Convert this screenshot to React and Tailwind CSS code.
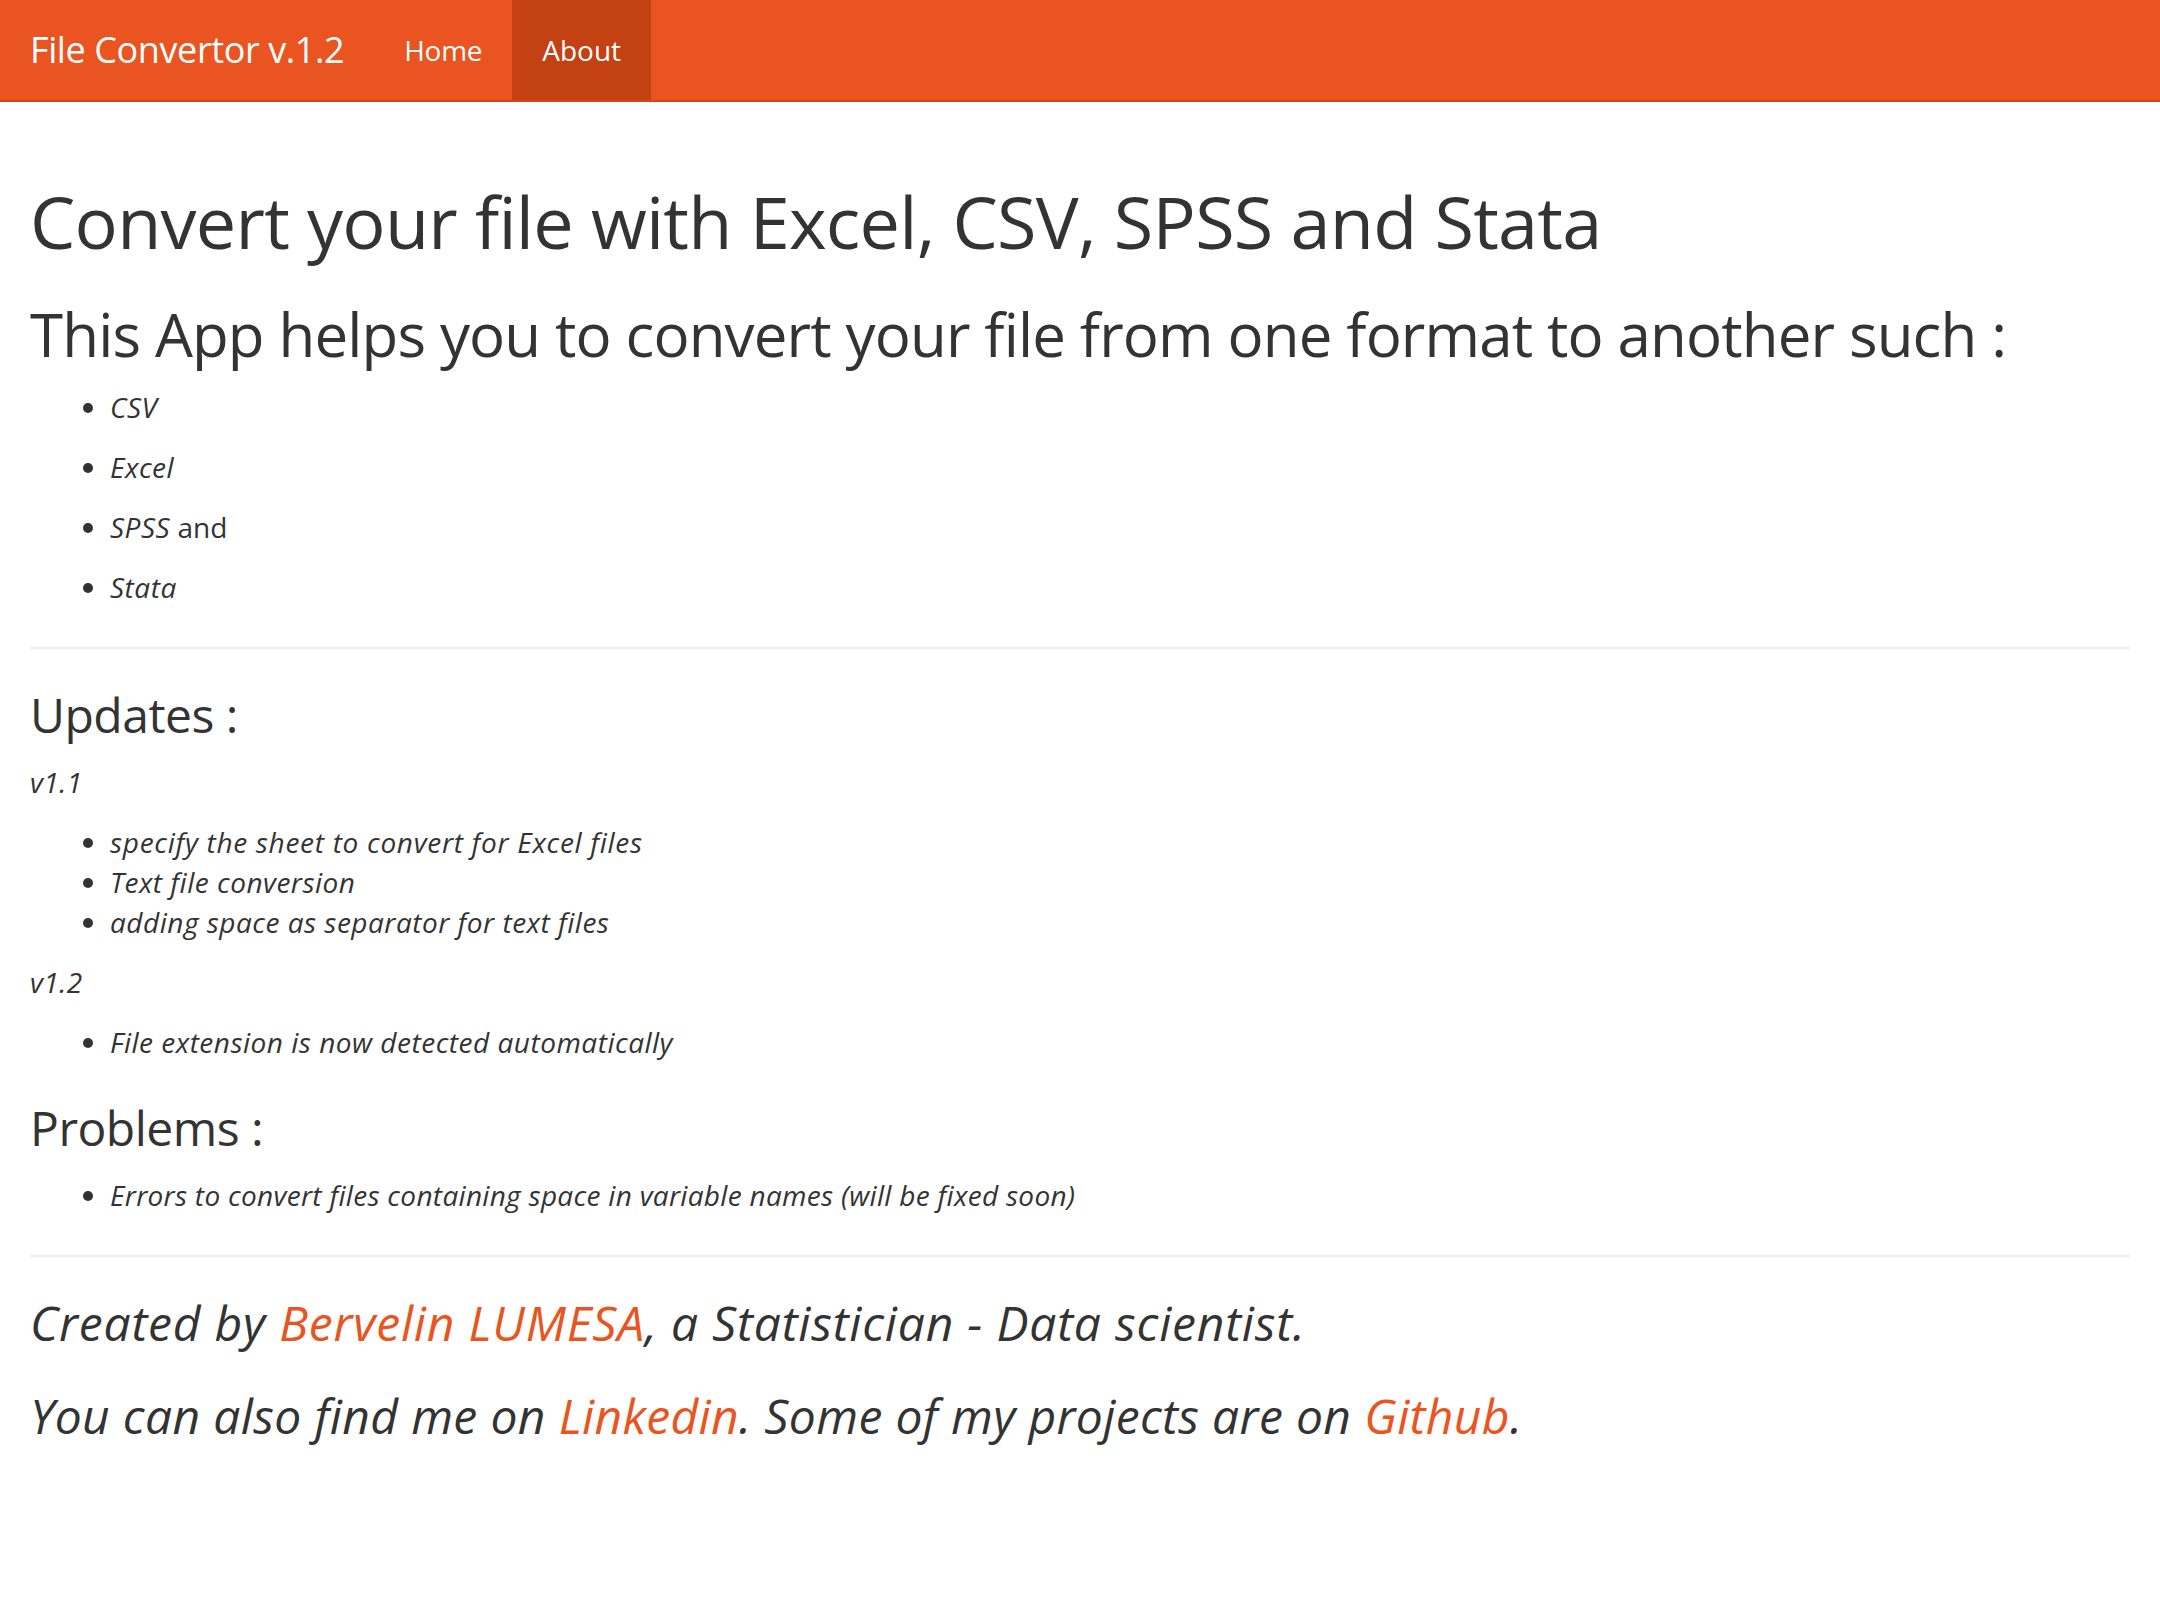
const LINK = 'text-[#e95420] hover:underline';
const EM = 'tracking-[0.5px]';

export default function App() {
  return (
    <div className="min-h-screen bg-white font-['Open_Sans',sans-serif] text-[28px] leading-[40px] text-[#333]">
      {/* Navbar */}
      <nav className="flex h-[102px] border-b-2 border-[#d34615] bg-[#e95420]">
        <a href="#" className="flex h-[100px] items-center px-[30px] text-[36px] tracking-[-0.4px] text-white">
          File Convertor v.1.2
        </a>
        <a href="#" className="flex h-[100px] items-center px-[30px] tracking-[-0.3px] text-white">
          Home
        </a>
        <a href="#" className="flex h-[100px] items-center bg-[#c34113] px-[30px] text-white">
          About
        </a>
      </nav>

      <div className="flow-root px-[30px] pt-[40px]">
        <h1 className="mt-[40px] mb-[20px] text-[72px] leading-[1.1] tracking-[-0.75px]">
          Convert your file with Excel, CSV, SPSS and Stata
        </h1>
        <h2 className="mt-[40px] mb-[20px] text-[60px] leading-[1.1] tracking-[-0.85px]">
          This App helps you to convert your file from one format to another such :
        </h2>
        <ul className="mb-[20px] list-disc pl-[80px]">
          <li><p className="mb-[20px]"><em className={EM}>CSV</em></p></li>
          <li><p className="mb-[20px]"><em className={EM}>Excel</em></p></li>
          <li><p className="mb-[20px]"><em className={EM}>SPSS</em> and</p></li>
          <li><p className="mb-[20px]"><em className={EM}>Stata</em></p></li>
        </ul>

        <hr className="my-[40px] border-t-2 border-[#eeeeee]" />

        <h3 className="mt-[40px] mb-[20px] text-[48px] leading-[1.1] tracking-[-0.5px]">Updates :</h3>
        <p className="mb-[20px]"><em className={EM}>v1.1</em></p>
        <ul className="mb-[20px] list-disc pl-[80px]">
          <li><em className="tracking-[0.7px]">specify the sheet to convert for Excel files</em></li>
          <li><em className={EM}>Text file conversion</em></li>
          <li><em className={EM}>adding space as separator for text files</em></li>
        </ul>
        <p className="mb-[20px]"><em className={EM}>v1.2</em></p>
        <ul className="mb-[20px] list-disc pl-[80px]">
          <li><em className={EM}>File extension is now detected automatically</em></li>
        </ul>

        <h3 className="mt-[40px] mb-[20px] text-[48px] leading-[1.1] tracking-[-0.5px]">Problems :</h3>
        <ul className="mb-[20px] list-disc pl-[80px]">
          <li><em className="tracking-[0.3px]">Errors to convert files containing space in variable names (will be fixed soon)</em></li>
        </ul>

        <hr className="my-[40px] border-t-2 border-[#eeeeee]" />

        <h3 className="mt-[40px] mb-[20px] text-[48px] leading-[1.1] italic tracking-[0.8px]">
          Created by <a href="#" className={LINK}>Bervelin LUMESA</a>, a Statistician - Data scientist.
        </h3>
        <h3 className="mt-[40px] mb-[20px] text-[48px] leading-[1.1] italic tracking-[0.35px]">
          You can also find me on <a href="#" className={LINK}>Linkedin</a>. Some of my projects are on{' '}
          <a href="#" className={LINK}>Github</a>.
        </h3>
      </div>
    </div>
  );
}
